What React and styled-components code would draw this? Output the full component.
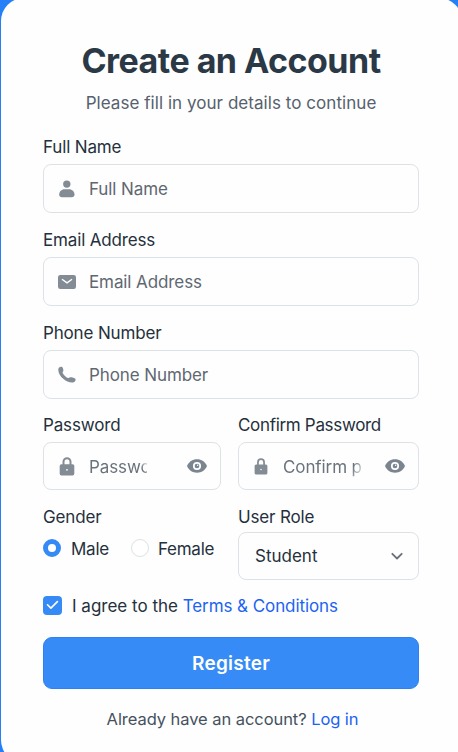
import React from 'react';
import styled, { createGlobalStyle } from 'styled-components';

const GlobalStyle = createGlobalStyle`
  * { box-sizing: border-box; }
  body { margin: 0; background: #2f86f8; overflow: hidden; }
`;

const Page = styled.main`
  display: flex;
  width: 458px;
  height: 752px;
  overflow: hidden;
  background: #2580f8;
  font-family: Inter, 'Liberation Sans', sans-serif;
  font-size: 17px;
  color: #25303d;
`;

const Card = styled.form`
  flex: none;
  width: 461px;
  height: 765px;
  margin: -2px 0 0 1px;
  padding: 42px 43px 0 42px;
  border-radius: 23px;
  background: #fefefe;
`;

const Title = styled.h1`
  margin: 0;
  height: 42px;
  line-height: 42px;
  font-size: 34px;
  font-weight: 700;
  letter-spacing: -0.53px;
  text-align: center;
  white-space: nowrap;
  color: #2b3947;
`;

const Subtitle = styled.p`
  margin: 9px 0 0;
  height: 24px;
  line-height: 24px;
  letter-spacing: 0.05px;
  text-align: center;
  white-space: nowrap;
  color: #56616d;
`;

const Fields = styled.div`
  display: flex;
  flex-direction: column;
  margin-top: 15px;
`;

const Columns = styled.div`
  display: grid;
  grid-template-columns: 178px 181px;
  column-gap: 17px;
`;

const Field = styled.div`
  display: flex;
  flex-direction: column;
  height: ${(p) => p.$height || 93}px;
`;

const Label = styled.label`
  height: ${(p) => p.$height || 34}px;
  line-height: ${(p) => p.$line || 34}px;
  letter-spacing: ${(p) => p.$tracking || -0.16}px;
  white-space: nowrap;
`;

const InputBox = styled.div`
  display: flex;
  align-items: center;
  height: ${(p) => p.$height || 49}px;
  width: 376px;
  max-width: 100%;
  padding: 0 13px;
  border: 1px solid #dce2e6;
  border-radius: 8px;
`;

const IconSlot = styled.span`
  display: flex;
  justify-content: center;
  width: ${(p) => p.$width || 20}px;
  margin-right: ${(p) => p.$gap || 12}px;
  color: #838c95;
`;

const Placeholder = styled.span`
  line-height: 22px;
  padding-top: 1px;
  letter-spacing: -0.1px;
  white-space: nowrap;
  color: #5e6872;
`;

const ClippedPlaceholder = styled(Placeholder)`
  width: ${(p) => p.$width}px;
  overflow: hidden;
  color: #6a737c;
  mask-image: linear-gradient(${(p) => p.$angle}deg, #000 ${(p) => p.$solid}px, transparent ${(p) => p.$end}px);
`;

const EyeSlot = styled.span`
  display: flex;
  margin-left: auto;
  color: #7b8590;
`;

const RadioRow = styled.div`
  display: flex;
  align-items: center;
  height: 30px;
  white-space: nowrap;
`;

const Radio = styled.span`
  flex: none;
  width: 18px;
  height: 18px;
  border-radius: 50%;
  background: #fff;
  border: ${(p) => (p.$checked ? '5px solid #368af6' : '1px solid #dde2e5')};
`;

const RadioText = styled.span`
  margin: 2px ${(p) => p.$after || 0}px 0 ${(p) => p.$before || 9}px;
  letter-spacing: -0.25px;
`;

const SelectBox = styled(InputBox)`
  justify-content: space-between;
  padding: 0 14px 0 16px;
`;

const Agreement = styled.div`
  display: flex;
  align-items: center;
  height: 20px;
  white-space: nowrap;
`;

const Checkbox = styled.span`
  display: flex;
  align-items: center;
  justify-content: center;
  width: 19px;
  height: 19px;
  margin-right: 10px;
  border-radius: 4px;
  background: #368af6;
`;

const AgreementText = styled.span`
  padding-top: 2px;
`;

const Link = styled.a`
  color: #1d63f2;
  letter-spacing: -0.08px;
`;

const RegisterButton = styled.button`
  display: block;
  width: 376px;
  height: 52px;
  margin-top: 22px;
  padding: 1px 0 0;
  border: 1px solid #2c82f4;
  border-radius: 9px;
  background: #368bf6;
  color: #fff;
  font: 600 19px Inter, 'Liberation Sans', sans-serif;
  letter-spacing: 0.25px;
`;

const Footer = styled.p`
  margin: 19px 0 0 3px;
  height: 22px;
  line-height: 22px;
  font-size: 16.5px;
  letter-spacing: -0.06px;
  text-align: center;
  white-space: nowrap;
  color: #46515e;
`;

const UserIcon = () => (
  <svg width="16" height="18" viewBox="0 0 16 18" fill="currentColor">
    <circle cx="7.800" cy="4.100" r="3.700" />
    <path d="M5.400 9.300h4.800c2.900 0 5.300 2.400 5.300 5.200 0 1.700-1 2.700-2.800 2.700H3C1.200 17.200.2 16.200.2 14.500c0-2.800 2.300-5.200 5.200-5.200Z" />
  </svg>
);

const MailIcon = () => (
  <svg width="18" height="14" viewBox="0 0 18 14" fill="none">
    <rect width="18" height="14" rx="2.300" fill="currentColor" />
    <path d="m4 4.200 5 3.600 5-3.600" stroke="#fff" strokeWidth="1.400" />
  </svg>
);

const PhoneIcon = () => (
  <svg width="18" height="17" viewBox="0 0 18 17" fill="currentColor">
    <path d="M.4 2.700C.8 1 2.600.3 3.800.8c1.100.6 1.800 2.900 1.500 4.100-.1.600-.8.900-.7 1.500.4 1.800 3.500 4.900 5.500 5.600.7.200 1.100-.6 1.900-.8 1.300-.3 4.400.4 5.200 1.400.8 1.100.2 3-1.400 3.600C9.400 17.700-.8 10 .4 2.700Z" />
  </svg>
);

const LockIcon = ({ small }) => (
  <svg width={small ? 14 : 16} height={small ? 17 : 19} viewBox="0 0 16 19" preserveAspectRatio="none" fill="none">
    <path d="M4.500 8V4.700a3.500 3.500 0 0 1 7 0V8" stroke="currentColor" strokeWidth="2" />
    <rect x=".7" y="7.300" width="14.600" height="11.200" rx="1.700" fill="currentColor" />
    <circle cx="8" cy="12.800" r=".9" fill="#fff" />
  </svg>
);

const EyeIcon = () => (
  <svg width="20" height="14" viewBox="0 0 20 14">
    <path d="M0 7C1.800 2.800 5.400.3 10 .3S18.200 2.800 20 7c-1.800 4.200-5.400 6.700-10 6.700S1.800 11.200 0 7Z" fill="currentColor" />
    <circle cx="10" cy="7" r="3.200" fill="currentColor" stroke="#fff" strokeWidth="1.700" />
    <circle cx="10.600" cy="6.300" r=".7" fill="#fff" />
  </svg>
);

const ChevronIcon = () => (
  <svg width="14" height="10" viewBox="0 0 14 10" fill="none">
    <path d="m2.300 2.800 4.700 4.700 4.700-4.700" stroke="#68727d" strokeWidth="1.800" strokeLinecap="round" strokeLinejoin="round" />
  </svg>
);

const CheckIcon = () => (
  <svg width="13" height="10" viewBox="0 0 13 10" fill="none">
    <path d="m1.500 4.800 3.400 3.300 6.500-6.500" stroke="#fff" strokeWidth="1.600" strokeLinecap="round" strokeLinejoin="round" />
  </svg>
);

function TextField({ label, icon, height }) {
  return (
    <Field $height={height}>
      <Label>{label}</Label>
      <InputBox>
        <IconSlot>{icon}</IconSlot>
        <Placeholder>{label}</Placeholder>
      </InputBox>
    </Field>
  );
}

export default function App() {
  return (
    <>
      <GlobalStyle />
      <Page>
        <Card>
          <Title>Create an Account</Title>
          <Subtitle>Please fill in your details to continue</Subtitle>
          <Fields>
            <TextField label="Full Name" icon={<UserIcon />} height={93} />
            <TextField label="Email Address" icon={<MailIcon />} height={92.5} />
            <TextField label="Phone Number" icon={<PhoneIcon />} height={92.5} />
            <Columns>
              <Field $height={82}>
                <Label>Password</Label>
                <InputBox $height={48}>
                  <IconSlot><LockIcon /></IconSlot>
                  <ClippedPlaceholder $width={58} $angle={60} $solid={50} $end={60}>Password</ClippedPlaceholder>
                  <EyeSlot><EyeIcon /></EyeSlot>
                </InputBox>
              </Field>
              <Field $height={82}>
                <Label $tracking={-0.32}>Confirm Password</Label>
                <InputBox $height={48}>
                  <IconSlot $width={18} $gap={13}><LockIcon small /></IconSlot>
                  <ClippedPlaceholder $width={79} $angle={110} $solid={70} $end={82}>Confirm password</ClippedPlaceholder>
                  <EyeSlot><EyeIcon /></EyeSlot>
                </InputBox>
              </Field>
              <Field $height={105}>
                <Label $height={43} $line={54}>Gender</Label>
                <RadioRow>
                  <Radio $checked />
                  <RadioText $before={10} $after={22}>Male</RadioText>
                  <Radio />
                  <RadioText>Female</RadioText>
                </RadioRow>
              </Field>
              <Field $height={105}>
                <Label $height={42} $line={54}>User Role</Label>
                <SelectBox $height={48}>
                  <span>Student</span>
                  <ChevronIcon />
                </SelectBox>
              </Field>
            </Columns>
          </Fields>
          <Agreement>
            <Checkbox><CheckIcon /></Checkbox>
            <AgreementText>I agree to the <Link>Terms &amp; Conditions</Link></AgreementText>
          </Agreement>
          <RegisterButton type="button">Register</RegisterButton>
          <Footer>Already have an account? <Link>Log in</Link></Footer>
        </Card>
      </Page>
    </>
  );
}
